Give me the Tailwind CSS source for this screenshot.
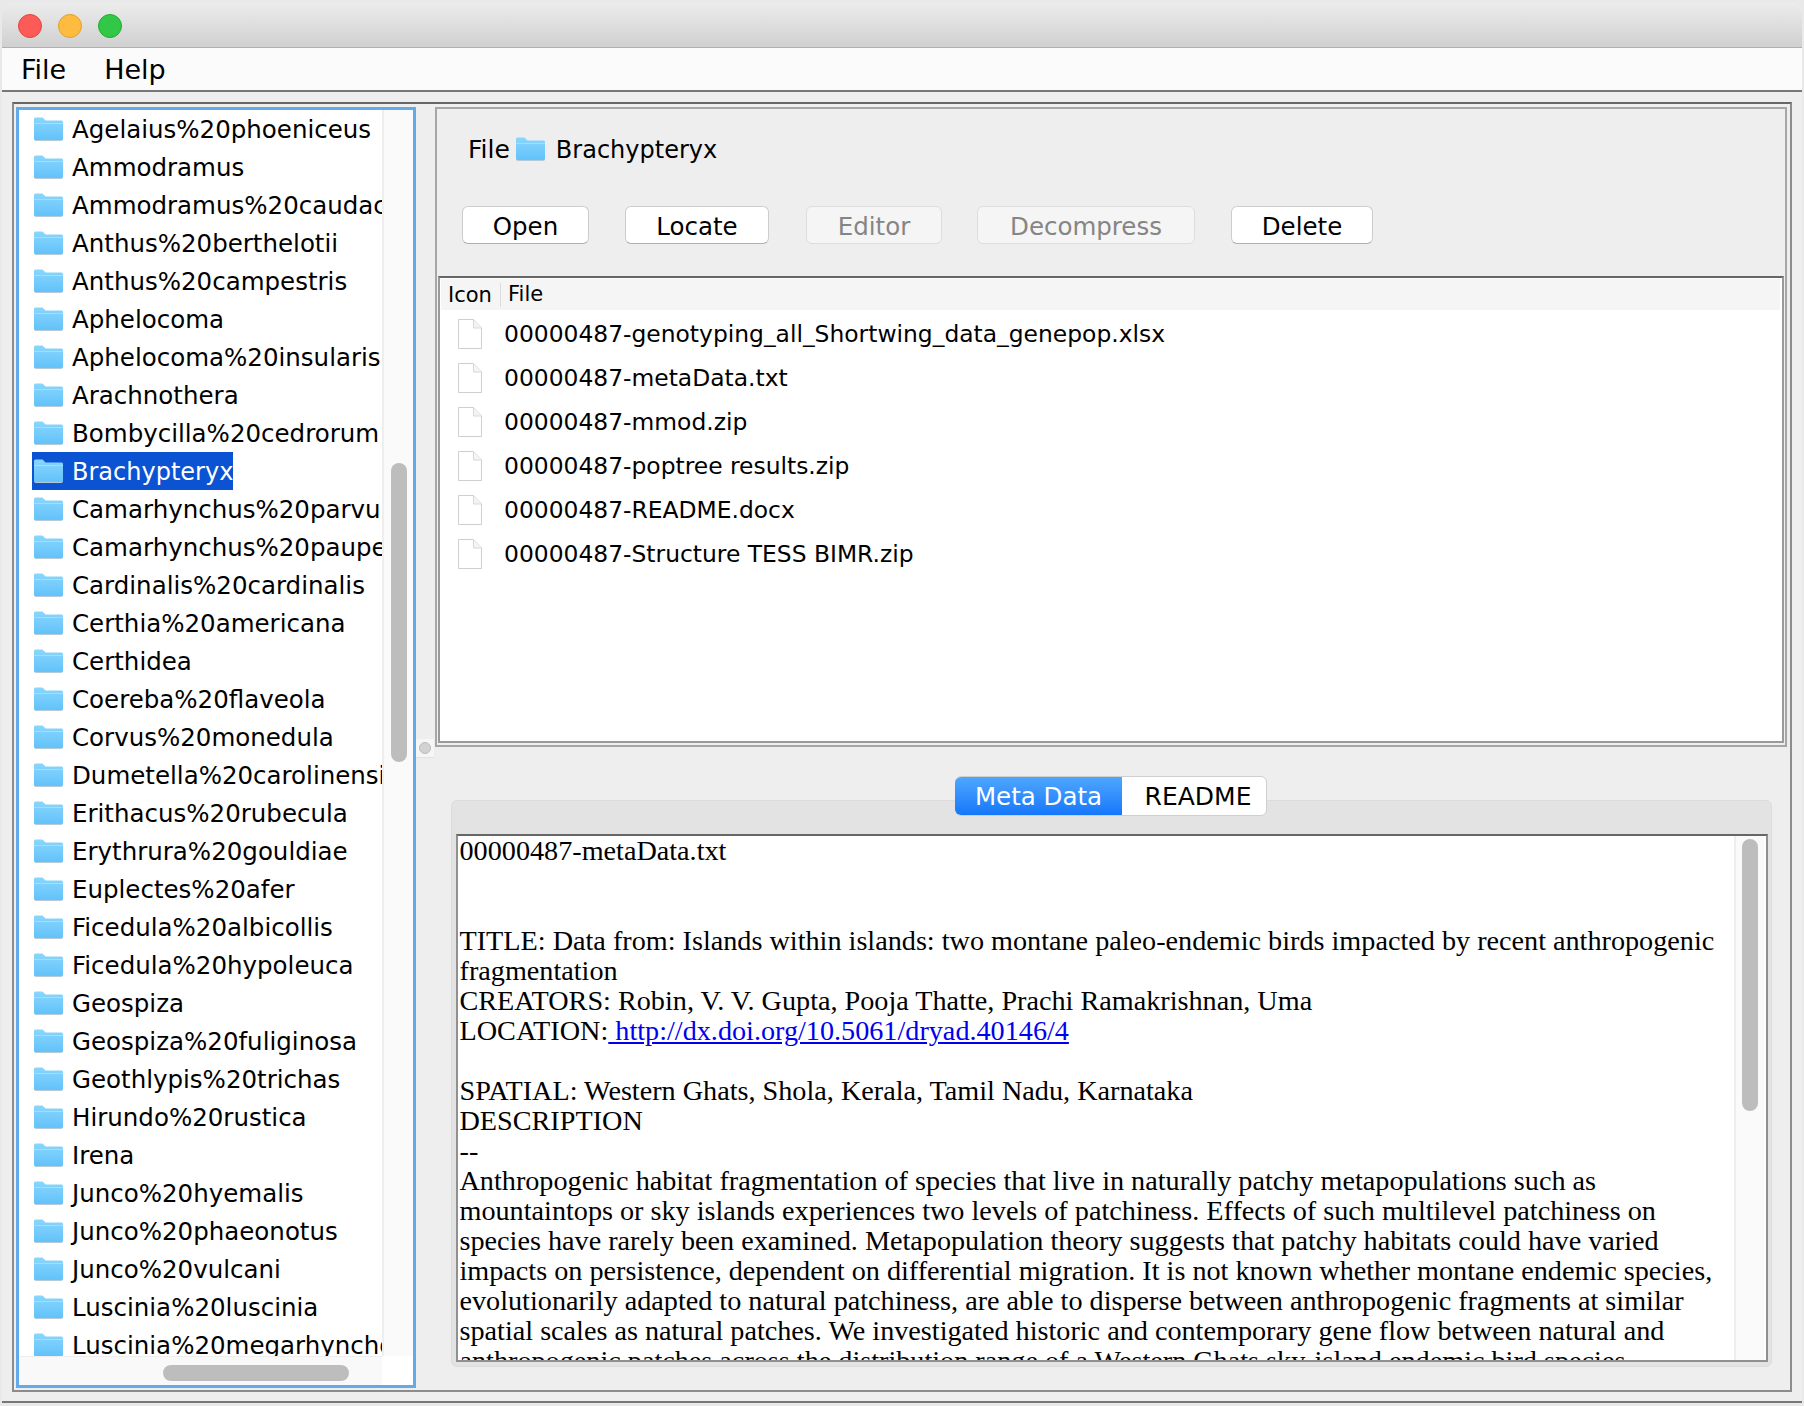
<!DOCTYPE html>
<html lang="en">

<head>
    <meta charset="UTF-8">
    <script src="https://cdn.jsdelivr.net/npm/@tailwindcss/browser@4"></script>
    <title>Dryad browser</title>
</head>

<body class="bg-[#e9e9e9] font-['DejaVu_Sans',sans-serif] text-black">
    <svg class="absolute w-0 h-0">
        <defs>
            <linearGradient id="folderFill" x1="0" y1="0" x2="0" y2="1">
                <stop offset="0" stop-color="#8ad6fd" />
                <stop offset="1" stop-color="#62c2fa" />
            </linearGradient>
            <symbol id="folder" viewBox="0 0 30 24">
                <path d="M1 22V2.5Q1 1 2.5 1H9.5L12.5 4H28.5Q30 4 30 5.5V22Q30 24 28 24H3Q1 24 1 22Z" fill="#b5c9d6" />
                <path d="M1 21.5V2.5Q1 0.5 2.5 0.5H9.5L12.5 3.5H28.5Q30 3.5 30 5.5V21.5Q30 23 28 23H3Q1 23 1 21.5Z" fill="url(#folderFill)" />
                <path d="M1 6.5H30" stroke="#a3dffd" stroke-width="1" />
            </symbol>
            <symbol id="fileIcon" viewBox="0 0 24 30">
                <path d="M0.5 0.5H15.5L23.5 9V29.5H0.5Z" fill="#fff" stroke="#cfcfcf" />
                <path d="M15.5 0.5V9H23.5" fill="#f4f4f4" stroke="#d8d8d8" />
            </symbol>
        </defs>
    </svg>

    <div class="w-[1804px] h-[1406px] overflow-hidden pl-[2px] pt-[3px]">
        <div class="w-[1800px] h-[1400px] flex flex-col rounded-t-[10px] overflow-hidden bg-[#eeeeee] border-b-2 border-[#777]">
            <!-- title bar -->
            <div class="h-[45px] shrink-0 flex items-center gap-[16px] pl-[16px] pt-[1px] bg-gradient-to-b from-[#ececec] to-[#d0d0d0] border-b border-[#b0b0b0]">
                <span class="w-[24px] h-[24px] rounded-full bg-[#fc5b57] border border-[#e2463f]"></span>
                <span class="w-[24px] h-[24px] rounded-full bg-[#fdbc40] border border-[#e0a228]"></span>
                <span class="w-[24px] h-[24px] rounded-full bg-[#33c748] border border-[#24ab33]"></span>
            </div>

            <!-- menu -->
            <div class="h-[44px] shrink-0 flex items-center bg-[#fbfbfb] border-b-2 border-[#777] text-[27px] pl-[19px] pt-[2px] gap-[38px]">
                <span>File</span>
                <span>Help</span>
            </div>

            <!-- split pane -->
            <div class="relative mt-[10px] ml-[10px] w-[1780px] h-[1290px] flex border-2 border-[#8c8c8c] border-t-[#666]">
                <!-- tree -->
                <div class="ml-[2px] mt-[3px] w-[400px] h-[1281px] shrink-0 border-[3px] border-[#62aaea] grid grid-cols-[363px_31px] grid-rows-[1246px_29px] bg-white">
                    <div id="tree" class="overflow-hidden text-[24.5px]"></div>
                    <div class="bg-[#fafafa] border-l-2 border-[#eeeeee] pt-[353px] pl-[7px]">
                        <div class="w-[16px] h-[299px] rounded-full bg-[#bdbdbd]"></div>
                    </div>
                    <div class="bg-[#f9f9f9] border-t border-[#eeeeee] pt-[8px] pl-[144px]">
                        <div class="w-[186px] h-[16px] rounded-full bg-[#bdbdbd]"></div>
                    </div>
                    <div class="bg-white"></div>
                </div>

                <!-- divider grip -->
                <div class="absolute left-[402px] top-[635px] w-[18px] h-[19px] bg-[#f6f6f6] border-b border-[#e2e2e2] flex items-center justify-center">
                    <span class="w-[12px] h-[12px] rounded-full bg-[#d2d2d2] border border-[#bcbcbc]"></span>
                </div>

                <!-- right pane -->
                <div class="ml-[19px] mt-[3px] w-[1352px] flex flex-col">
                    <div class="h-[640px] shrink-0 border-2 border-[#a6a6a6] flex flex-col">
                        <div class="h-[40px] mt-[20px] shrink-0 flex items-center pl-[31px]">
                            <span class="pt-[2px] text-[25px]">File</span>
                            <svg class="w-[30px] h-[24px] ml-[5px]"><use href="#folder" /></svg>
                            <span class="pt-[2px] ml-[11px] text-[24px]">Brachypteryx</span>
                        </div>
                        <div class="mt-[37px] ml-[25px] h-[38px] shrink-0 flex text-[24.5px]">
                            <button class="w-[127px] pt-[2px] rounded-[6px] bg-white border border-[#cdcdcd] border-b-[#b0b0b0]">Open</button>
                            <button class="w-[144px] pt-[2px] ml-[36px] rounded-[6px] bg-white border border-[#cdcdcd] border-b-[#b0b0b0]">Locate</button>
                            <button class="w-[136px] pt-[2px] ml-[37px] rounded-[6px] bg-[#f5f5f5] border border-[#dddddd] text-[#858585]">Editor</button>
                            <button class="w-[218px] pt-[2px] ml-[35px] rounded-[6px] bg-[#f5f5f5] border border-[#dddddd] text-[#858585]">Decompress</button>
                            <button class="w-[142px] pt-[2px] ml-[36px] rounded-[6px] bg-white border border-[#cdcdcd] border-b-[#b0b0b0]">Delete</button>
                        </div>

                        <!-- file table -->
                        <div class="mt-[32px] mx-[1px] h-[467px] shrink-0 border-2 border-[#9a9a9a] border-t-[#666] bg-white pl-[1px] pr-[2px] pt-[1px]">
                            <div class="h-[31px] flex items-center bg-[#f5f5f5] text-[21px]">
                                <span class="pl-[7px] w-[60px] border-r border-[#dcdcdc] leading-[24px]">Icon</span>
                                <span class="pl-[7px]">File</span>
                            </div>
                            <div id="files" class="pt-[2px] text-[23.4px]"></div>
                        </div>
                    </div>

                    <!-- tabs -->
                    <div class="flex flex-col items-center">
                        <div class="relative z-10 mt-[29px] h-[40px] flex text-[25px] rounded-[6px] border border-[#cfcfcf] bg-white">
                            <span class="w-[167px] -ml-px pt-[2px] flex items-center justify-center rounded-l-[6px] text-white text-[24.5px] bg-gradient-to-b from-[#4fa6fd] to-[#1377fb]">Meta Data</span>
                            <span class="w-[144px] pl-[8px] pt-[2px] flex items-center justify-center">README</span>
                        </div>
                        <div class="-mt-[16px] w-[1321px] h-[567px] rounded-[6px] bg-[#e3e3e3] border border-[#dcdcdc] pt-[33px] pl-[4px] pr-[3px]">
                            <div class="h-[528px] flex border-2 border-[#909090] border-t-[#666] bg-white overflow-hidden">
                                <div class="flex-1 overflow-hidden pl-[2px] font-['Liberation_Serif',serif] text-[28.2px] leading-[30px] whitespace-nowrap">
                                    <div>00000487-metaData.txt</div>
                                    <div>&nbsp;</div>
                                    <div>&nbsp;</div>
                                    <div>TITLE: Data from: Islands within islands: two montane paleo-endemic birds impacted by recent anthropogenic</div>
                                    <div>fragmentation</div>
                                    <div>CREATORS: Robin, V. V. Gupta, Pooja Thatte, Prachi Ramakrishnan, Uma</div>
                                    <div>LOCATION:<a class="text-[#0000ee] underline whitespace-pre"> http://dx.doi.org/10.5061/dryad.40146/4</a></div>
                                    <div>&nbsp;</div>
                                    <div>SPATIAL: Western Ghats, Shola, Kerala, Tamil Nadu, Karnataka</div>
                                    <div>DESCRIPTION</div>
                                    <div>--</div>
                                    <div>Anthropogenic habitat fragmentation of species that live in naturally patchy metapopulations such as</div>
                                    <div>mountaintops or sky islands experiences two levels of patchiness. Effects of such multilevel patchiness on</div>
                                    <div>species have rarely been examined. Metapopulation theory suggests that patchy habitats could have varied</div>
                                    <div>impacts on persistence, dependent on differential migration. It is not known whether montane endemic species,</div>
                                    <div>evolutionarily adapted to natural patchiness, are able to disperse between anthropogenic fragments at similar</div>
                                    <div>spatial scales as natural patches. We investigated historic and contemporary gene flow between natural and</div>
                                    <div>anthropogenic patches across the distribution range of a Western Ghats sky-island endemic bird species</div>
                                </div>
                                <div class="w-[30px] shrink-0 mr-[2px] bg-[#fafafa] border-l-2 border-[#eeeeee] pt-[3px] pl-[6px]">
                                    <div class="w-[16px] h-[272px] rounded-full bg-[#bdbdbd]"></div>
                                </div>
                            </div>
                        </div>
                    </div>
                </div>
            </div>
        </div>
    </div>

    <script>
        const birds = ['Agelaius%20phoeniceus', 'Ammodramus', 'Ammodramus%20caudacutus', 'Anthus%20berthelotii', 'Anthus%20campestris', 'Aphelocoma', 'Aphelocoma%20insularis', 'Arachnothera', 'Bombycilla%20cedrorum', 'Brachypteryx', 'Camarhynchus%20parvulus', 'Camarhynchus%20pauper', 'Cardinalis%20cardinalis', 'Certhia%20americana', 'Certhidea', 'Coereba%20flaveola', 'Corvus%20monedula', 'Dumetella%20carolinensis', 'Erithacus%20rubecula', 'Erythrura%20gouldiae', 'Euplectes%20afer', 'Ficedula%20albicollis', 'Ficedula%20hypoleuca', 'Geospiza', 'Geospiza%20fuliginosa', 'Geothlypis%20trichas', 'Hirundo%20rustica', 'Irena', 'Junco%20hyemalis', 'Junco%20phaeonotus', 'Junco%20vulcani', 'Luscinia%20luscinia', 'Luscinia%20megarhynchos'];
        const files = ['00000487-genotyping_all_Shortwing_data_genepop.xlsx', '00000487-metaData.txt', '00000487-mmod.zip', '00000487-poptree results.zip', '00000487-README.docx', '00000487-Structure TESS BIMR.zip'];

        document.getElementById('tree').innerHTML = birds.map((name) => {
            const selected = name === 'Brachypteryx';
            return `<div class="h-[38px] pl-[13px] flex items-center whitespace-nowrap">
                <div class="flex items-center h-[38px] pl-[1px] ${selected ? 'bg-[#0b53d2] text-white text-[24px]' : ''}">
                    <svg class="w-[30px] h-[24px] shrink-0"><use href="#folder" /></svg>
                    <span class="ml-[9px] pt-[2px]">${name}</span>
                </div>
            </div>`;
        }).join('');

        document.getElementById('files').innerHTML = files.map((name) => `
            <div class="h-[44px] flex items-center whitespace-pre">
                <svg class="w-[24px] h-[30px] ml-[17px] shrink-0"><use href="#fileIcon" /></svg>
                <span class="ml-[22px] pt-[2px]">${name}</span>
            </div>`).join('');
    </script>
</body>

</html>
